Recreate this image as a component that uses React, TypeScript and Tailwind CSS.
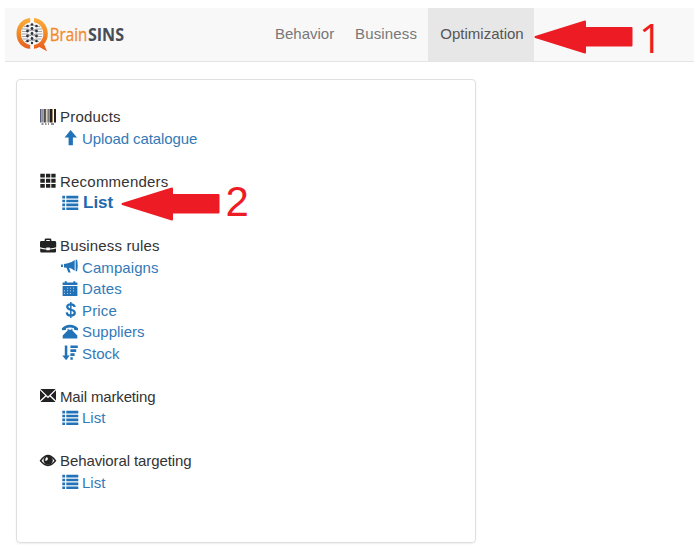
import type { ReactNode } from "react";

function Icon({ children }: { children: ReactNode }) {
  return (
    <svg className="h-4 w-4 shrink-0 overflow-visible" viewBox="0 0 16 16" fill="currentColor">
      {children}
    </svg>
  );
}

const Barcode = () => (
  <Icon>
    <path fill="#575d80" d="M0 0h1.6v13.5H0z" />
    <path fill="#a5896b" d="M5.4 0h1v13.5h-1zM12 0h1v13.5h-1z" />
    <path d="M2.5 0h.9v13.5h-.9zM4.2 0h1.4v13.5H4.2zM7.6 0h1v13.5h-1zM9.5 0H12v13.5H9.5zM14 0h2v13.5h-2z" />
    <path d="M1.5 14.5h2v1h-2zM5 14.5h1.5v1H5zM8 14.5h1v1H8zM11 14.5h3v1h-3z" />
  </Icon>
);
const ArrowUp = () => (
  <Icon>
    <path d="M8.6 0L15 7.4h-4.1v7.8H6.6V7.4H2.6z" />
  </Icon>
);
const Grid = () => (
  <Icon>
    <path d="M.3.8h4.5v3.8H.3zM6 .8h4.3v3.8H6zM11.3.8h4.3v3.8h-4.3zM.3 5.8h4.5v3.9H.3zM6 5.8h4.3v3.9H6zM11.3 5.8h4.3v3.9h-4.3zM.3 11h4.5v3.8H.3zM6 11h4.3v3.8H6zM11.3 11h4.3v3.8h-4.3z" />
  </Icon>
);
const ListIcon = () => (
  <Icon>
    <path d="M.3.8h2.8v2.6H.3zM4.3.8h12v2.6h-12zM.3 4.7h2.8v2.6H.3zM4.3 4.7h12v2.6h-12zM.3 8.6h2.8v2.6H.3zM4.3 8.6h12v2.6h-12zM.3 12.5h2.8v2.6H.3zM4.3 12.5h12v2.6h-12z" />
  </Icon>
);
const Briefcase = () => (
  <Icon>
    <path
      fillRule="evenodd"
      d="M4.6 3V1.9Q4.6.5 6 .5h4q1.4 0 1.4 1.4V3h3.2Q16.2 3 16.2 4.4V9.3q-3 1-6.3 1.1v-.8H6.3v.8Q3 10.3 0 9.3V4.4Q0 3 1.4 3zM6.2 3h3.6V1.9H6.2zM.2 10.6q3 .9 6.1 1v.6h3.4v-.6q3.1-.1 6.3-1v3q0 1-1 1H1.2q-1 0-1-1z"
    />
  </Icon>
);
const Bullhorn = () => (
  <Icon>
    <path d="M13.6.8h1.5q.6 2.6.6 5.7t-.6 5.8h-1.5zM5 4.6Q9.5 4 12.7 1.1v10.7Q9.5 9.2 7 8.7l1.6 4.8H6.3L4.6 8.8 2 8.5V5zM-1 5.5H.9v2.4H-1z" />
  </Icon>
);
const Calendar = () => (
  <Icon>
    <path
      fillRule="evenodd"
      d="M.6 1.5h2.2V.3h2v1.2h6.5V.3h2v1.2h2.1V4H.6zM.6 5h14.8v10H.6zM5 6.7h.9v.9H5zM8 6.7h.9v.9H8zM11 6.7h.9v.9H11zM2 9.4h.9v.9H2zM5 9.4h.9v.9H5zM8 9.4h.9v.9H8zM11 9.4h.9v.9H11zM2 12.2h.9v.9H2zM5 12.2h.9v.9H5zM8 12.2h.9v.9H8z"
    />
  </Icon>
);
const Dollar = () => (
  <Icon>
    <g fill="none" stroke="currentColor">
      <path strokeWidth="2.2" d="M12.6 5Q12.3 2.3 8.8 2.3T5.2 4.8c0 4.1 7.6 1.9 7.6 6Q12.6 13.5 8.8 13.5T4.7 10.3" />
      <path strokeWidth="1.5" d="M8.8 0v16" />
    </g>
  </Icon>
);
const Phone = () => (
  <Icon>
    <path d="M0 5.2V4.3Q3 .8 8 .8t8 3.5v1.6q0 .5-.5.4l-3-.4q-.5-.1-.5-.6V4.2Q8 3 4 4.2v1.1q0 .5-.5.6l-3 .4Q0 6.4 0 5.9zM5.6 4.8h1v1h2.8v-1h1v1.6l4.9 5v3H.7v-3l4.9-5z" />
  </Icon>
);
const SortDown = () => (
  <Icon>
    <path d="M2.8.4h2.5v10.1h2.4L4.1 15.3.3 10.5h2.5zM8.4.4h7.4v2.5H8.4zM8.4 4.3h5.8v2.6H8.4zM8.4 8.3h4.2v2.6H8.4zM8.4 12.2h2.4v2.5H8.4z" />
  </Icon>
);
const Envelope = () => (
  <Icon>
    <path d="M.4.9h15.2L8 8.4zM0 2.2l5.3 5.4L0 12.6zM16 2.2v10.4l-5.3-5zM6.2 8.5L8 10.3l1.8-1.8 5.8 5.5H.4z" />
  </Icon>
);
const Eye = () => (
  <Icon>
    <path fill="none" stroke="currentColor" strokeWidth="1.5" d="M.6 7.8Q8-2.6 15.4 7.8 8 17 .6 7.8z" />
    <path fillRule="evenodd" d="M8.2 2.6a4.6 4.6 0 1 0 .01 0zM6.8 3.9a1.9 1.9 0 0 1 1 2.3 1.7 1.7 0 0 1-2.6 1.2Q5 4.9 6.8 3.9z" />
  </Icon>
);

function Logo() {
  return (
    <svg className="h-10 w-[120px] shrink-0" viewBox="0 0 120 40">
      <defs>
        <linearGradient id="ring" x1="0" y1="0" x2="0" y2="1">
          <stop offset="0" stopColor="#fdb03c" />
          <stop offset=".5" stopColor="#f18625" />
          <stop offset="1" stopColor="#e8581f" />
        </linearGradient>
      </defs>
      <path
        fill="url(#ring)"
        d="M14.2 3C6 3.4.5 10.4.5 18.7S6 33.3 14.2 33.8V30C9.6 29 5 25.5 5 18.7S9.6 8.4 14.2 7.2zM18 3C26 3.5 31.8 10.3 31.8 18.7c0 4.4-1.6 7.9-3.8 10.3l3 7.2-7.7-4.2Q21 33.6 18 33.8V30c5-1 9.3-4.5 9.3-11.3S23 8.4 18 7.2z"
      />
      <path
        stroke="#989ca1"
        strokeWidth=".9"
        fill="none"
        d="M8 11.5h4l4-2 4 2h4M6 14h6l4 2 4-2h6M6 16.5h6l4-2 4 2h6M5.5 19h6l4 2 4-2h7M6 21.5h6l4-2 4 2h6M6.5 24h5l4 2 4-2h6M9 26.5h3l4-2 4 2h3"
      />
      <g fill="#30333a">
        <circle cx="11.5" cy="11" r="1.3" />
        <circle cx="16" cy="9.5" r="1.3" />
        <circle cx="20.5" cy="11" r="1.3" />
        <circle cx="11.5" cy="16" r="1.4" />
        <circle cx="16" cy="13.5" r="1.4" />
        <circle cx="20.5" cy="16" r="1.4" />
        <circle cx="11.5" cy="21" r="1.4" />
        <circle cx="16" cy="18.5" r="1.4" />
        <circle cx="20.5" cy="21" r="1.4" />
        <circle cx="11.5" cy="26" r="1.3" />
        <circle cx="16" cy="23.5" r="1.4" />
        <circle cx="20.5" cy="26" r="1.3" />
        <circle cx="16" cy="28" r="1.2" />
      </g>
      <g transform="translate(33.8 26) scale(.82 1)">
        <text fontFamily="'Open Sans', sans-serif" fontSize="18.5" fill="#f28a2c" stroke="#f28a2c" strokeWidth=".3">Brain</text>
      </g>
      <g transform="translate(71.9 26) scale(.87 1)">
        <text fontFamily="'Open Sans', sans-serif" fontSize="18.5" fontWeight="700" fill="#484c55">SINS</text>
      </g>
    </svg>
  );
}

function Pointer({ label, place, text }: { label: string; place: string; text: string }) {
  return (
    <div className={`absolute flex h-[34px] items-center text-[#ed1c24] ${place}`}>
      <svg className="h-[34px] w-[99px] shrink-0" viewBox="0 0 99 34" fill="currentColor" stroke="currentColor" strokeLinejoin="round" strokeWidth="2">
        <path d="M1.5 17L51 1.5V8h46.5v17.5H51v7z" />
      </svg>
      <span className={`leading-[34px] ${text}`}>{label}</span>
    </div>
  );
}

type Item = { icon: ReactNode; label: string; style?: string };

function Section({ icon, title, style = "", items }: { icon: ReactNode; title: string; style?: string; items: Item[] }) {
  return (
    <section className="text-[15px] leading-[21.5px] text-[#333]">
      <div className="flex h-[21.5px] items-center gap-1">
        <span className="-mt-px text-[#222]">{icon}</span>
        <span className={style}>{title}</span>
      </div>
      {items.map((item) => (
        <a key={item.label} className="ml-[22px] flex h-[21.5px] items-center gap-1 text-[#337ab7]">
          <span className="-mt-px text-[#2272b8]">{item.icon}</span>
          <span className={item.style}>{item.label}</span>
        </a>
      ))}
    </section>
  );
}

export default function App() {
  return (
    <div className="relative h-[548px] w-[700px] overflow-hidden bg-white pt-2 font-['Liberation_Sans',Arial,sans-serif]">
      <nav className="ml-[5px] flex h-[54px] w-[689px] border-b border-[#e4e4e4] bg-[#f8f8f8] text-[15px] text-[#777]">
        <div className="w-[254px] pl-[11px] pt-[7px]">
          <Logo />
        </div>
        <a className="flex w-[84px] items-center pl-4">Behavior</a>
        <a className="flex w-[80px] items-center pl-3 tracking-[0.15px]">Business</a>
        <a className="ml-[5px] flex w-[106px] items-center justify-center bg-[#e7e7e7] pl-0.5 text-[#555]">Optimization</a>
      </nav>
      <main className="ml-4 mt-[17px] flex h-[464px] w-[460px] flex-col gap-[21.5px] rounded-[4px] border border-[#dfdfdf] pl-[23px] pt-[26.45px] shadow-[0_1px_2px_rgba(0,0,0,0.07)]">
        <Section
          icon={<Barcode />}
          title="Products"
          style="tracking-[0.2px]"
          items={[{ icon: <ArrowUp />, label: "Upload catalogue", style: "tracking-[-0.1px]" }]}
        />
        <Section
          icon={<Grid />}
          title="Recommenders"
          style="tracking-[0.22px]"
          items={[{ icon: <ListIcon />, label: "List", style: "pl-px text-[17px] font-bold text-[#2069ad]" }]}
        />
        <Section
          icon={<Briefcase />}
          title="Business rules"
          style="tracking-[0.15px]"
          items={[
            { icon: <Bullhorn />, label: "Campaigns", style: "tracking-[0.08px]" },
            { icon: <Calendar />, label: "Dates", style: "tracking-[0.15px]" },
            { icon: <Dollar />, label: "Price", style: "tracking-[0.15px]" },
            { icon: <Phone />, label: "Suppliers" },
            { icon: <SortDown />, label: "Stock" },
          ]}
        />
        <Section icon={<Envelope />} title="Mail marketing" style="tracking-[-0.15px]" items={[{ icon: <ListIcon />, label: "List" }]} />
        <Section icon={<Eye />} title="Behavioral targeting" style="tracking-[-0.1px]" items={[{ icon: <ListIcon />, label: "List" }]} />
      </main>
      <Pointer label="1" place="left-[533.5px] top-[20px]" text="ml-[6.5px] font-['Open_Sans',sans-serif] text-[41px]" />
      <Pointer label="2" place="left-[121px] top-[187px]" text="-mt-1 ml-[5.5px] text-[42px]" />
    </div>
  );
}
